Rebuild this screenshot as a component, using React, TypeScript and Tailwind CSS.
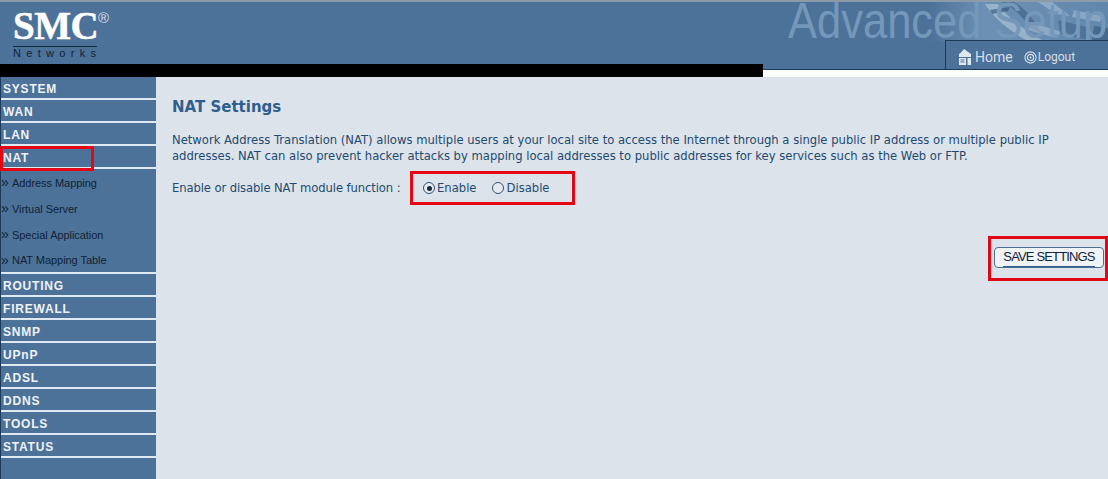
const topMenu = ["SYSTEM", "WAN", "LAN", "NAT"];
const subMenu = ["Address Mapping", "Virtual Server", "Special Application", "NAT Mapping Table"];
const bottomMenu = ["ROUTING", "FIREWALL", "SNMP", "UPnP", "ADSL", "DDNS", "TOOLS", "STATUS"];

const MenuItem = ({ label }: { label: string }) => (
  <div className="h-[23px] border-b-2 border-[#dfe9f2] pl-[2px] pt-[3px] text-[12px] leading-[18px] font-bold tracking-[0.8px] text-[#eef2f6]">
    {label}
  </div>
);

// blurry photo behind the "Advanced Setup" title
const HeaderArt = () => (
  <svg width="178" height="40" viewBox="0 0 178 40" className="absolute right-0 top-0">
    <defs>
      <linearGradient id="fade" x1="0" x2="1" y1="0" y2="0">
        <stop offset="0" stopColor="#6c90b3" stopOpacity="0" />
        <stop offset="0.3" stopColor="#7094b7" stopOpacity="0.9" />
        <stop offset="1" stopColor="#6288ad" stopOpacity="0.95" />
      </linearGradient>
    </defs>
    <rect width="178" height="40" fill="url(#fade)" />
    <path d="M55 2C62 14 78 28 96 38H112C92 26 76 14 68 2Z" fill="#a6bdd3" opacity="0.75" />
    <path d="M72 0C84 6 94 16 100 26L112 32C104 16 92 4 84 0Z" fill="#38597d" opacity="0.55" />
    <path d="M100 20L132 30L126 36L98 28Z" fill="#a6bdd3" opacity="0.6" />
    <path d="M108 0L126 12L140 14L122 0Z" fill="#a6bdd3" opacity="0.6" />
    <path d="M128 18L160 26L158 38L130 32Z" fill="#3f6389" opacity="0.6" />
    <path d="M144 8L172 14L170 20L142 15Z" fill="#a9bfd5" opacity="0.55" />
    <path d="M164 24L178 26V38H162Z" fill="#34557a" opacity="0.6" />
    <path d="M60 8L80 5L78 9L62 12Z" fill="#2f5074" opacity="0.6" />
  </svg>
);

const HomeIcon = () => (
  <svg width="15" height="16" viewBox="0 0 15 16" className="mr-[2px]">
    <path d="M6 0L13 5V8H1V5L3 3.5Z" fill="#dfe7ef" />
    <path d="M1 9H8V16H1ZM9.5 9H13V16H9.5Z" fill="#dfe7ef" />
    <path d="M2.5 11H6.5M2.5 13H6.5" stroke="#4d7299" strokeWidth="1" />
  </svg>
);

const LogoutIcon = () => (
  <svg width="13" height="13" viewBox="0 0 13 13" className="mr-[1px]">
    <circle cx="6.5" cy="6.5" r="5.6" fill="none" stroke="#d5dfe9" strokeWidth="1.1" />
    <circle cx="6.5" cy="6.5" r="3.1" fill="none" stroke="#d5dfe9" strokeWidth="1.2" />
    <circle cx="6.5" cy="6.5" r="1" fill="#d5dfe9" />
  </svg>
);

const Radio = ({ checked }: { checked?: boolean }) => (
  <span className="flex h-[12px] w-[12px] items-center justify-center rounded-full border border-[#34506e] bg-[#e6ebf0]">
    {checked && <span className="h-[5px] w-[5px] rounded-full bg-[#14283c]" />}
  </span>
);

export default function App() {
  return (
    <div className="relative h-[479px] w-[1108px] overflow-hidden bg-[#dde3ea] font-['DejaVu_Sans',sans-serif]">
      {/* header */}
      <div className="relative h-[64px] overflow-hidden border-t-2 border-[#8b9ba8] bg-[#4d7299]">
        <HeaderArt />
        <div className="absolute left-[788px] top-[-10px] origin-left scale-x-[0.87] whitespace-nowrap font-['Liberation_Sans',sans-serif] text-[50px] leading-[58px] text-[#7497ba]">
          Advanced Setup
        </div>
        <div className="absolute left-[13px] top-[6px] w-[84px]">
          <div className="relative h-[36px] font-['Liberation_Serif',serif] text-[39px] leading-[36px] font-bold tracking-[-0.5px] text-white [-webkit-text-stroke:0.5px_white]">
            SMC
            <span className="absolute left-[85px] top-[2px] font-['Liberation_Sans',sans-serif] text-[15px] leading-[15px] font-normal tracking-normal text-[#d5dfe9] [-webkit-text-stroke:0]">
              ®
            </span>
          </div>
          <div className="mt-[2px] border-t border-[#14283c] font-['Liberation_Sans',sans-serif] text-[11px] leading-[12px] tracking-[5.3px] whitespace-nowrap text-[#10233a]">
            Networks
          </div>
        </div>
      </div>

      <div className="flex h-[13px]">
        <div className="w-[763px] bg-black" />
        <div className="flex-1 bg-white">
          <div className="h-[6px] border-b border-[#1d3a57] bg-[#4d7299]" />
        </div>
      </div>

      {/* home / logout tab */}
      <div className="absolute left-[945px] top-[40px] flex h-[29px] w-[163px] items-center border-t border-l border-[#1d3a57] bg-[#4d7299] pt-[4px] pl-[12px] font-['Roboto',sans-serif] text-[14px] text-[#d5dfe9]">
        <HomeIcon />
        <span>Home</span>
        <span className="ml-[11px] flex items-center">
          <LogoutIcon />
          <span className="text-[12px]">Logout</span>
        </span>
      </div>

      <div className="flex h-[402px]">
        {/* sidebar */}
        <div className="w-[156px] border-l border-[#1d3a57] bg-[#4d7299] font-['Liberation_Sans',sans-serif]">
          {topMenu.map((m) => (
            <MenuItem key={m} label={m} />
          ))}
          <div className="flex h-[105px] flex-col border-b-2 border-[#dfe9f2]">
            {subMenu.map((s) => (
              <div key={s} className="flex flex-1 items-center pt-[3px] text-[11px] tracking-[-0.05px] text-[#0f2236]">
                <span className="w-[11px] pb-[2px] text-[14px] leading-[14px]">»</span>
                <span>{s}</span>
              </div>
            ))}
          </div>
          {bottomMenu.map((m) => (
            <MenuItem key={m} label={m} />
          ))}
        </div>

        {/* content */}
        <div className="flex-1 pt-[20px] pl-[16px] text-[11.6px] leading-[16px] text-[#224a70]">
          <h1 className="text-[15px] leading-[20px] font-bold text-[#2f5e8d]">NAT Settings</h1>
          <p className="mt-[15px] w-[885px]">
            Network Address Translation (NAT) allows multiple users at your local site to access the Internet through a
            single public IP address or multiple public IP addresses. NAT can also prevent hacker attacks by mapping
            local addresses to public addresses for key services such as the Web or FTP.
          </p>
          <div className="mt-[16px] flex h-[16px] items-center">
            <span className="w-[251px] whitespace-nowrap tracking-[-0.1px]">Enable or disable NAT module function :</span>
            <span className="flex items-center gap-[2px]">
              <Radio checked />
              <span>Enable</span>
            </span>
            <span className="ml-[15px] flex items-center gap-[3px]">
              <Radio />
              <span>Disable</span>
            </span>
          </div>
          <div className="mt-[51px] flex justify-end pr-[4px]">
            <button className="flex h-[21px] w-[110px] justify-center rounded-[4px] border border-[#4d6f92] bg-[#f0f3f6] font-['Liberation_Sans',sans-serif] text-[13px] leading-[16px] tracking-[-0.85px] text-[#10233a]">
              <span className="mt-[1px] h-[18px] border-b border-[#2f5e8d]">SAVE SETTINGS</span>
            </button>
          </div>
        </div>
      </div>

      {/* red annotation boxes */}
      <div className="absolute left-0 top-[146px] h-[25px] w-[94px] border-[3px] border-[#e30613]" />
      <div className="absolute left-[410px] top-[171px] h-[34px] w-[165px] border-[3px] border-[#e30613]" />
      <div className="absolute left-[988px] top-[236px] h-[45px] w-[120px] border-[3px] border-[#e30613]" />
    </div>
  );
}
